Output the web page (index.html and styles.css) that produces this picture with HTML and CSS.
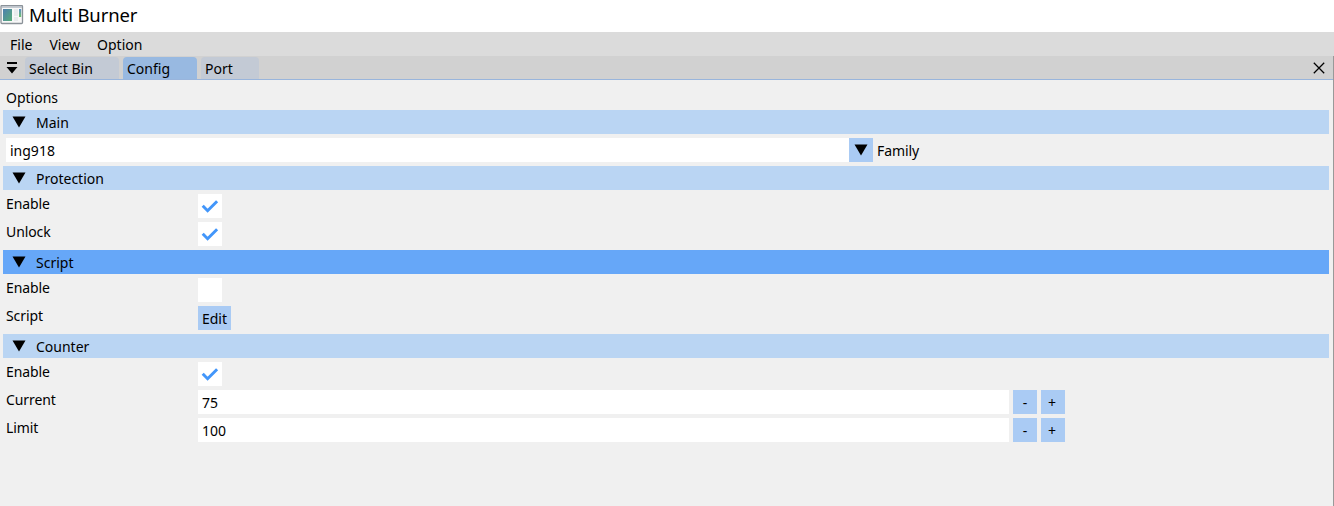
FILE: index.html
```html
<!DOCTYPE html>
<html lang="en">
<head>
<meta charset="utf-8">
<title>Multi Burner</title>
<link rel="stylesheet" href="styles.css">
</head>
<body>
<header class="titlebar">
  <svg class="app-icon" width="24" height="20" viewBox="0 0 24 20">
    <defs>
      <linearGradient id="pane" x1="0" y1="0" x2="1" y2="1"><stop offset="0" stop-color="#4e7fb0"/><stop offset="1" stop-color="#58ad78"/></linearGradient>
      <linearGradient id="side" x1="0" y1="0" x2="0" y2="1"><stop offset="0" stop-color="#5b8fc8"/><stop offset="1" stop-color="#6ec06c"/></linearGradient>
    </defs>
    <rect x="1" y="0.5" width="21.5" height="18" rx="1" fill="#f8f8f8" stroke="#8b9299" stroke-width="1.3"/>
    <path d="M2 2H22" stroke="#b4bdc6" stroke-width="1.5"/>
    <rect x="3" y="4" width="9" height="12" fill="url(#pane)"/>
    <rect x="14" y="4" width="4" height="7" fill="#e9ebed"/><rect x="14" y="12" width="4" height="4" fill="#e9ebed"/>
    <rect x="19" y="4" width="2.2" height="8" fill="url(#side)"/>
  </svg>
  <h1 class="title">Multi Burner</h1>
</header>
<nav class="menubar"><span>File</span><span>View</span><span>Option</span></nav>
<div class="window">
  <div class="tabs">
    <svg class="tab-menu" width="12" height="13" viewBox="0 0 12 13"><path d="M1 0H11V2H1ZM0.5 5H11.5L6 11.5Z"/></svg>
    <div class="tab tab-select">Select Bin</div>
    <div class="tab tab-config active">Config</div>
    <div class="tab tab-port">Port</div>
    <svg class="close" width="12" height="12" viewBox="0 0 12 12"><path d="M0.8 0.8L11.2 11.2M11.2 0.8L0.8 11.2" stroke="#000" stroke-width="1.25"/></svg>
  </div>
  <main class="panel">
    <div class="caption">Options</div>
    <div class="section"><svg class="arrow" width="14" height="12" viewBox="0 0 14 12"><path d="M0.5 0.6H13.5L7 11.6Z"/></svg>Main</div>
    <div class="row family">
      <div class="field">ing918</div>
      <div class="button drop"><svg width="14" height="12" viewBox="0 0 14 12"><path d="M0.5 0.5H13.5L7 11.5Z"/></svg></div>
      <span class="suffix">Family</span>
    </div>
    <div class="section"><svg class="arrow" width="14" height="12" viewBox="0 0 14 12"><path d="M0.5 0.6H13.5L7 11.6Z"/></svg>Protection</div>
    <div class="row"><span class="label">Enable</span><div class="check"><svg width="24" height="24" viewBox="0 0 24 24"><path d="M4.7 11.8L9.6 16.7L19.1 7.3"/></svg></div></div>
    <div class="row"><span class="label">Unlock</span><div class="check"><svg width="24" height="24" viewBox="0 0 24 24"><path d="M4.7 11.8L9.6 16.7L19.1 7.3"/></svg></div></div>
    <div class="section hovered"><svg class="arrow" width="14" height="12" viewBox="0 0 14 12"><path d="M0.5 0.6H13.5L7 11.6Z"/></svg>Script</div>
    <div class="row"><span class="label">Enable</span><div class="check"></div></div>
    <div class="row"><span class="label">Script</span><div class="button edit">Edit</div></div>
    <div class="section"><svg class="arrow" width="14" height="12" viewBox="0 0 14 12"><path d="M0.5 0.6H13.5L7 11.6Z"/></svg>Counter</div>
    <div class="row"><span class="label">Enable</span><div class="check"><svg width="24" height="24" viewBox="0 0 24 24"><path d="M4.7 11.8L9.6 16.7L19.1 7.3"/></svg></div></div>
    <div class="row"><span class="label">Current</span><div class="field number">75</div><div class="button step">-</div><div class="button step plus">+</div></div>
    <div class="row"><span class="label">Limit</span><div class="field number">100</div><div class="button step">-</div><div class="button step plus">+</div></div>
  </main>
</div>
</body>
</html>
```
FILE: styles.css
```css
* { box-sizing: border-box; }
body {
  margin: 0;
  height: 506px;
  overflow: hidden;
  display: flex;
  flex-direction: column;
  background: #f0f0f0;
  color: #000;
  font: 14px/24px "Noto Sans", sans-serif;
  white-space: nowrap;
}
svg { display: block; flex: none; }
.titlebar { height: 32px; flex: none; display: flex; background: #fff; }
.app-icon { margin-top: 5px; }
.title { margin: 0 0 0 5px; font-size: 18.5px; font-weight: 400; line-height: 30px; letter-spacing: -0.13px; }
.menubar { height: 24px; flex: none; display: flex; gap: 17px; padding: 1px 0 0 10px; background: #dbdbdb; }
.window { flex: 1; border-right: 1px solid #999; }
.tabs { height: 24px; display: flex; align-items: flex-end; background: #d1d1d1; border-bottom: 1px solid #99b5dc; }
.tab-menu { margin: 0 7px 4px 6px; }
.tab { height: 22px; padding-left: 4px; line-height: 23px; background: #c3cad5; border-radius: 4px 4px 0 0; }
.tab-select { width: 94px; }
.tab-config { width: 74px; margin: 0 4px; }
.tab-port { width: 58px; }
.tab.active { background: #98b9e1; }
.close { margin: 0 8px 5px auto; }
.panel { display: flex; flex-direction: column; gap: 4px; padding: 6px 4px 0 3px; }
.caption { height: 20px; padding-left: 3px; }
.section { height: 24px; display: flex; padding-left: 9px; line-height: 26px; background: #bad5f3; }
.section.hovered { background: #66a7f8; }
.arrow { margin: 6px 10px 0 0; }
.row { height: 24px; display: flex; padding-left: 3px; }
.label { width: 192px; line-height: 20px; letter-spacing: -0.1px; }
.field { padding-left: 4px; line-height: 26px; background: #fff; }
.family .field { width: 843px; }
.suffix { margin-left: 4px; line-height: 26px; letter-spacing: -0.1px; }
.button { height: 24px; line-height: 26px; text-align: center; background: #aacbf4; }
.drop { width: 24px; padding: 6px 5px; }
.check { width: 24px; height: 24px; background: #fff; }
.check path { fill: none; stroke: #4296fa; stroke-width: 3; }
.edit { width: 33px; }
.number { width: 811px; }
.step { width: 24px; margin-left: 4px; }
.plus { padding-right: 2px; }
```
